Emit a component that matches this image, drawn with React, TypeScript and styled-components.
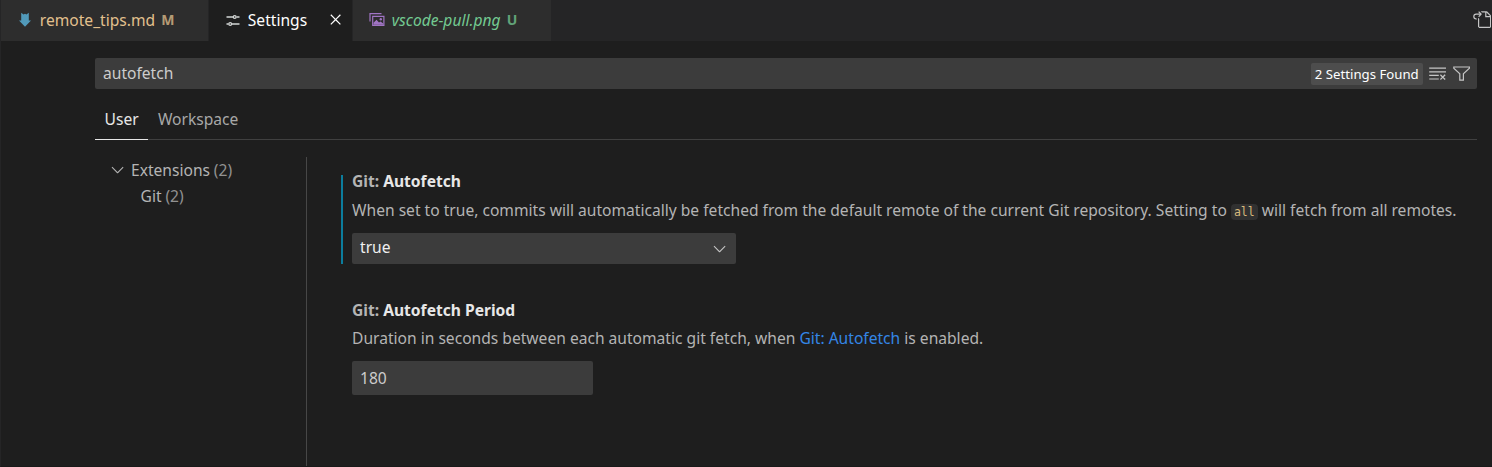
import React from 'react';
import styled, { createGlobalStyle } from 'styled-components';

const GlobalStyle = createGlobalStyle`
  *, *::before, *::after { box-sizing: border-box; }
  body {
    margin: 0;
    background: #1e1e1e;
    color: #b4b4b4;
    font: 15.6px/26px "Noto Sans", sans-serif;
  }
`;

const Editor = styled.div`
  display: flex;
  flex-direction: column;
  height: 467px;
  overflow: hidden;
  border-left: 1px solid #252526;
  border-bottom: 1px solid #191919;
  white-space: nowrap;
`;

const TabBar = styled.div`
  display: flex;
  flex: none;
  height: 41px;
  background: #252526;
`;

const Tab = styled.div<{ $width: number; $active?: boolean; $color: string }>`
  display: flex;
  align-items: center;
  flex: none;
  width: ${(p) => p.$width}px;
  padding: 0 7px 2px 12px;
  border-right: 1px solid #252526;
  background: ${(p) => (p.$active ? '#1e1e1e' : '#2d2d2d')};
  color: ${(p) => p.$color};
`;

const TabIcon = styled.svg`
  flex: none;
  width: 24px;
  height: 24px;
  margin-right: 2.8px;
`;

const TabLabel = styled.span<{ $italic?: boolean }>`
  font-style: ${(p) => (p.$italic ? 'italic' : 'normal')};
`;

const Badge = styled.span`
  margin-left: 6.2px;
  font-size: 14px;
  font-weight: 700;
  opacity: 0.75;
`;

const Icon = styled.svg`
  display: block;
  flex: none;
  width: 19.2px;
  height: 19.2px;
  fill: currentColor;
`;

const CloseIcon = styled(Icon)`
  margin-left: auto;
`;

const TabActions = styled.div`
  display: flex;
  align-items: center;
  margin-left: auto;
  margin-right: 1px;
  padding-bottom: 2px;
  color: #c5c5c5;
`;

const Settings = styled.main`
  display: flex;
  flex-direction: column;
  flex: 1;
  padding: 17px 15px 0 94px;
`;

const SearchBox = styled.div`
  display: flex;
  align-items: center;
  flex: none;
  height: 31px;
  padding: 0 5.4px 0 8px;
  border-radius: 2px;
  background: #3c3c3c;
  color: #cccccc;
`;

const Query = styled.span`
  padding-bottom: 2px;
`;

const FoundCount = styled.span`
  margin-left: auto;
  margin-right: 5.6px;
  padding: 0 4px;
  border-radius: 2px;
  background: #4d4d4d;
  color: #ffffff;
  font-size: 13.2px;
  line-height: 22px;
`;

const SearchActions = styled.div`
  display: flex;
  gap: 5px;
  color: #c5c5c5;
`;

const Scopes = styled.div`
  display: flex;
  flex: none;
  height: 51px;
  padding-top: 10px;
  border-bottom: 1px solid #404040;
`;

const Scope = styled.div<{ $active?: boolean }>`
  height: 41px;
  padding: 7px 9.6px 0 9.6px;
  border-bottom: 1px solid ${(p) => (p.$active ? '#e7e7e7' : 'transparent')};
  color: ${(p) => (p.$active ? '#e7e7e7' : '#a8a8a8')};
`;

const Body = styled.div`
  display: flex;
  flex: 1;
  padding-top: 17px;
`;

const Toc = styled.nav`
  flex: none;
  width: 212px;
  border-right: 1px solid #474747;
`;

const TocRow = styled.div<{ $indent: number }>`
  display: flex;
  align-items: center;
  gap: 3.8px;
  height: 26px;
  padding-left: ${(p) => p.$indent}px;
`;

const Count = styled.span`
  color: #919191;
`;

const List = styled.section`
  display: flex;
  flex-direction: column;
  padding: 18px 0 0 34px;
  gap: 40px;
`;

const Setting = styled.article<{ $modified?: boolean }>`
  padding-left: 9px;
  border-left: 2px solid ${(p) => (p.$modified ? '#0c7d9d' : 'transparent')};
`;

const Title = styled.h2`
  margin: 0;
  color: #e7e7e7;
  font-size: 15.6px;
  font-weight: 700;
  line-height: 12px;
`;

const Category = styled.span`
  color: #b4b4b4;
`;

const Description = styled.p`
  margin: 10px 0 10px;

  ${Setting} + ${Setting} & {
    margin-top: 9px;
  }
`;

const Code = styled.code`
  padding: 1px 3px;
  border-radius: 4px;
  background: #313131;
  color: #d7ba7d;
  font: 11.5px "DejaVu Sans Mono", monospace;
`;

const SettingLink = styled.a`
  color: #3486e6;
`;

const Select = styled.div`
  display: flex;
  align-items: center;
  justify-content: space-between;
  width: 384px;
  height: 31px;
  padding: 0 7px 0 8px;
  border-radius: 2px;
  background: #3c3c3c;
  color: #f0f0f0;
`;

const SelectValue = styled.span`
  padding-bottom: 3px;
`;

const SelectArrow = styled(Icon)`
  color: #c5c5c5;
`;

const NumberField = styled.div`
  width: 241px;
  height: 34px;
  padding: 4px 8px;
  border-radius: 2px;
  background: #3c3c3c;
  color: #cccccc;
`;

const CHEVRON = 'M7.976 10.072l4.357-4.357.62.618L8.284 11h-.618L3 6.333l.619-.618 4.357 4.357z';
const CLOSE =
  'M8 8.707l3.646 3.647.708-.707L8.707 8l3.647-3.646-.707-.708L8 7.293 4.354 3.646l-.707.708L7.293 8l-3.646 3.646.707.708L8 8.707z';
const FILTER = 'M15 2v1.67l-5 4.759V14H6V8.429l-5-4.76V2h14zM7 8v5h2V8l5-4.76V3H2v.24L7 8z';
const CLEAR =
  'M10 12.6l.7.7 1.6-1.6 1.6 1.6.8-.7L13 11l1.7-1.6-.8-.8-1.6 1.7-1.6-1.7-.7.8 1.6 1.6-1.6 1.6zM1 4h14V3H1v1zm0 3h14V6H1v1zm8 2.5V9H1v1h8v-.5zM9 13v-1H1v1h8z';
const GO_TO_FILE =
  'M6 5.914l2.06-2.06v-.708L5.915 1l-.707.707.043.043.25.25 1 1h-3a2.5 2.5 0 0 0 0 5H4V7h-.5a1.5 1.5 0 1 1 0-3h3L5.207 5.293 5.914 6 6 5.914zM11 2H8.328l-1-1H12l.71.29 3 3L16 5v9l-1 1H6l-1-1V6.5l1 .847V14h9V6h-4V2zm1 0v3h3l-3-3z';

export default function App() {
  return (
    <>
      <GlobalStyle />
      <Editor>
        <TabBar>
          <Tab $width={208} $color="#e2c08d">
            <TabIcon viewBox="0 0 24 24">
              <path d="M8.2 4.800l2.400 1.700 1.400-.7 1.400.7 2.400-1.700v7.700h2.200L12 18.700l-6-6.200h2.200z" fill="#519aba" />
            </TabIcon>
            <TabLabel>remote_tips.md</TabLabel>
            <Badge>M</Badge>
          </Tab>
          <Tab $width={144} $active $color="#ffffff">
            <TabIcon viewBox="0 0 24 24" fill="none" stroke="#d4d7d6" strokeWidth="1.3">
              <path d="M5.500 9h6.500M15.500 9h3M5.500 16h2M11 16h7.500" />
              <circle cx="13.700" cy="9" r="1.400" />
              <circle cx="9.200" cy="16" r="1.400" />
            </TabIcon>
            <TabLabel>Settings</TabLabel>
            <CloseIcon viewBox="0 0 16 16">
              <path d={CLOSE} />
            </CloseIcon>
          </Tab>
          <Tab $width={199} $color="#73c991">
            <TabIcon viewBox="0 0 24 24">
              <path d="M5 13.500V5.700h11.500M7.700 8.300h11.200v9H7.700z" fill="none" stroke="#a074c4" strokeWidth="1.200" />
              <path d="M8.500 16.700v-2l3-3 2.500 2.800 1.500-1 2.700 2v1.200z" fill="#a074c4" />
              <circle cx="15.800" cy="11.200" r="1.200" fill="#a074c4" />
            </TabIcon>
            <TabLabel $italic>vscode-pull.png</TabLabel>
            <Badge>U</Badge>
          </Tab>
          <TabActions>
            <Icon viewBox="0 0 16 16">
              <path d={GO_TO_FILE} />
            </Icon>
          </TabActions>
        </TabBar>
        <Settings>
          <SearchBox>
            <Query>autofetch</Query>
            <FoundCount>2 Settings Found</FoundCount>
            <SearchActions>
              <Icon viewBox="0 0 16 16">
                <path d={CLEAR} />
              </Icon>
              <Icon viewBox="0 0 16 16">
                <path d={FILTER} />
              </Icon>
            </SearchActions>
          </SearchBox>
          <Scopes>
            <Scope $active>User</Scope>
            <Scope>Workspace</Scope>
          </Scopes>
          <Body>
            <Toc>
              <TocRow $indent={13}>
                <Icon viewBox="0 0 16 16">
                  <path d={CHEVRON} />
                </Icon>
                <span>Extensions</span>
                <Count>(2)</Count>
              </TocRow>
              <TocRow $indent={45.6}>
                <span>Git</span>
                <Count>(2)</Count>
              </TocRow>
            </Toc>
            <List>
              <Setting $modified>
                <Title>
                  <Category>Git: </Category>Autofetch
                </Title>
                <Description>
                  When set to true, commits will automatically be fetched from the default remote of the
                  current Git repository. Setting to <Code>all</Code> will fetch from all remotes.
                </Description>
                <Select>
                  <SelectValue>true</SelectValue>
                  <SelectArrow viewBox="0 0 16 16">
                    <path d={CHEVRON} />
                  </SelectArrow>
                </Select>
              </Setting>
              <Setting>
                <Title>
                  <Category>Git: </Category>Autofetch Period
                </Title>
                <Description>
                  Duration in seconds between each automatic git fetch, when{' '}
                  <SettingLink>Git: Autofetch</SettingLink> is enabled.
                </Description>
                <NumberField>180</NumberField>
              </Setting>
            </List>
          </Body>
        </Settings>
      </Editor>
    </>
  );
}
